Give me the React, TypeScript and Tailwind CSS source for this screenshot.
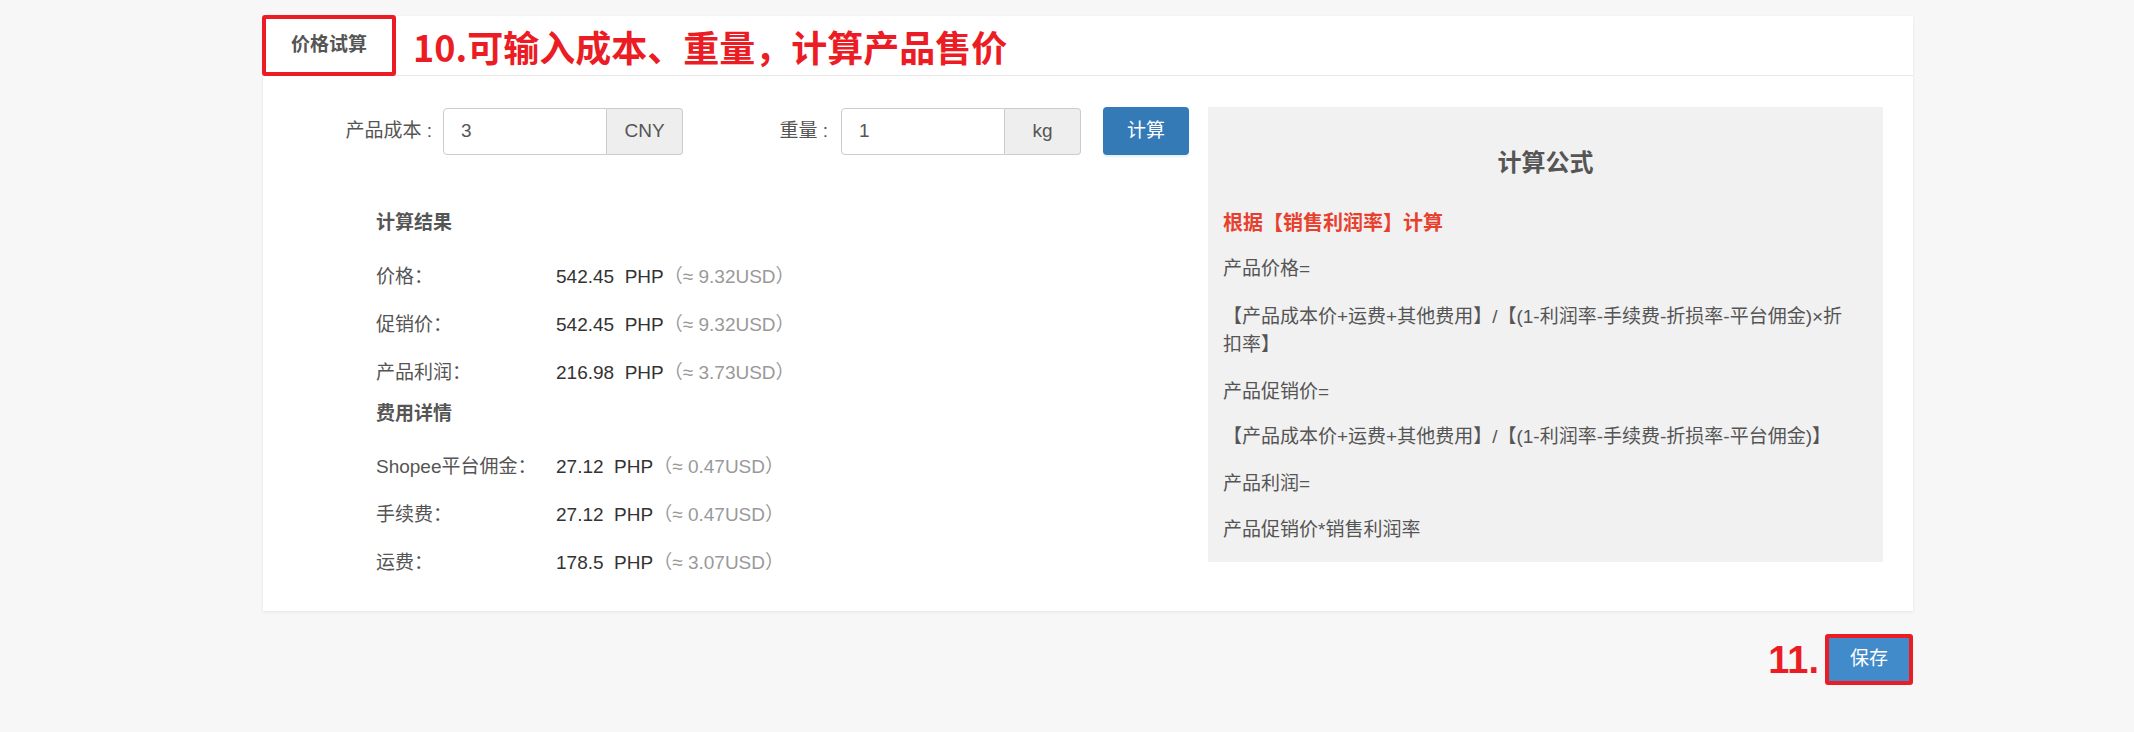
import React from "react";

const FONT = "font-['Liberation_Sans','Noto_Sans_CJK_SC',sans-serif]";

const RESULTS = [
  { label: "价格：", value: "542.45", usd: "9.32" },
  { label: "促销价：", value: "542.45", usd: "9.32" },
  { label: "产品利润：", value: "216.98", usd: "3.73" },
];

const FEES = [
  { label: "Shopee平台佣金：", value: "27.12", usd: "0.47" },
  { label: "手续费：", value: "27.12", usd: "0.47" },
  { label: "运费：", value: "178.5", usd: "3.07" },
];

function ResultRow({ label, value, usd, first }: { label: string; value: string; usd: string; first?: boolean }) {
  return (
    <div className={`flex h-[28px] items-center ${first ? "" : "mt-[20px]"}`}>
      <span className="w-[180px] text-[#555]">{label}</span>
      <span className="text-[#333]">
        {value}&nbsp;&nbsp;PHP
      </span>
      <span className="text-[#999]">（≈ {usd}USD）</span>
    </div>
  );
}

function InputGroup({ value, unit }: { value: string; unit: string }) {
  return (
    <div className="flex h-[47px] w-[240px]">
      <div className="flex w-[164px] items-center rounded-l-[4px] border border-[#ccc] bg-white pl-[17px] text-[#555]">
        {value}
      </div>
      <div className="flex flex-1 items-center justify-center rounded-r-[4px] border border-l-0 border-[#ccc] bg-[#eee] text-[#555]">
        {unit}
      </div>
    </div>
  );
}

export default function App() {
  return (
    <div className={`min-h-[732px] w-full bg-[#f7f7f7] pt-[16px] text-[19px] ${FONT}`}>
      {/* Card */}
      <div className="ml-[263px] w-[1650px] bg-white shadow-[0_1px_3px_rgba(0,0,0,0.08)]">
        {/* Header */}
        <div className="flex h-[60px] items-center border-b border-[#e7e7e7]">
          <div className="-ml-px -mt-px flex h-[61px] w-[134px] items-center justify-center rounded-[3px] border-[4px] border-[#ec1c24] font-bold text-[#555]">
            价格试算
          </div>
          <span className="ml-[17px] text-[36px] font-bold leading-none text-[#ec1c24] font-['Noto_Sans_CJK_SC',sans-serif]">
            10.可输入成本、重量，计算产品售价
          </span>
        </div>

        {/* Body */}
        <div className="flex items-start pb-[34px] pr-[30px] pt-[31px]">
          {/* Left */}
          <div className="flex-1">
            <div className="flex items-center">
              <label className="w-[180px] pr-[11px] text-right text-[#555]">产品成本 :</label>
              <InputGroup value="3" unit="CNY" />
              <label className="w-[158px] pr-[13px] text-right text-[#555]">重量 :</label>
              <InputGroup value="1" unit="kg" />
              <button className="ml-[22px] h-[48px] w-[86px] rounded-[4px] bg-[#337ab7] text-white shadow-[0_2px_2px_rgba(51,122,183,0.12)]">
                计算
              </button>
            </div>

            <div className="pl-[113px]">
              <div className="mt-[54px] h-[28px] font-bold leading-[28px] text-[#555]">计算结果</div>
              <div className="mt-[26px]">
                {RESULTS.map((r, i) => (
                  <ResultRow key={r.label} {...r} first={i === 0} />
                ))}
              </div>
              <div className="mt-[13px] h-[28px] font-bold leading-[28px] text-[#555]">费用详情</div>
              <div className="mt-[25px]">
                {FEES.map((r, i) => (
                  <ResultRow key={r.label} {...r} first={i === 0} />
                ))}
              </div>
            </div>
          </div>

          {/* Formula panel */}
          <div className="ml-[19px] w-[675px] bg-[#f1f1f1] px-[15px] pb-[18px] pt-[39px] leading-[28px] text-[#555]">
            <h3 className="text-center text-[24px] font-bold leading-[34px] text-[#555]">计算公式</h3>
            <p className="mt-[29px] text-[20px] font-bold text-[#e8402f]">根据【销售利润率】计算</p>
            <p className="mt-[18px]">产品价格=</p>
            <p className="mt-[20px]">
              【产品成本价+运费+其他费用】/【(1-利润率-手续费-折损率-平台佣金)×折
              <br />
              扣率】
            </p>
            <p className="mt-[19px]">产品促销价=</p>
            <p className="mt-[17px]">【产品成本价+运费+其他费用】/【(1-利润率-手续费-折损率-平台佣金)】</p>
            <p className="mt-[19px]">产品利润=</p>
            <p className="mt-[18px]">产品促销价*销售利润率</p>
          </div>
        </div>
      </div>

      {/* Save */}
      <div className="ml-[263px] mt-[23px] flex w-[1650px] items-center justify-end">
        <span className="mr-[6px] text-[38px] font-bold leading-none text-[#ec1c24]">11.</span>
        <div className="rounded-[3px] border-[4px] border-[#ec1c24] p-0">
          <button className="flex h-[43px] w-[80px] items-center justify-center bg-[#428bca] text-white">保存</button>
        </div>
      </div>
    </div>
  );
}
